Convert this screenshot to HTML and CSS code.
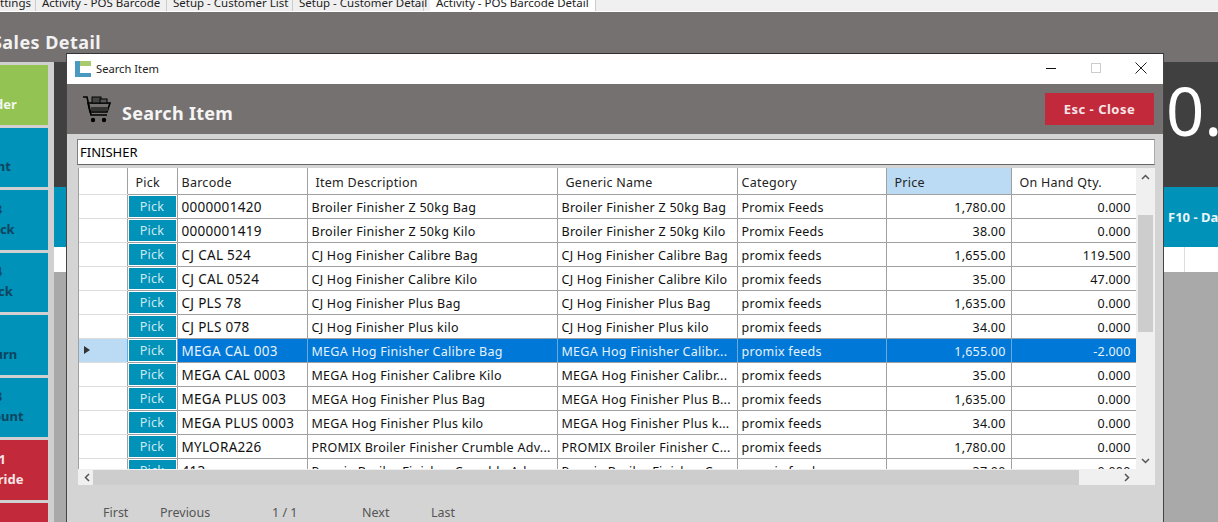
FILE: index.html
```html
<!DOCTYPE html>
<html lang="en">

<head>
    <meta charset="UTF-8">
    <title>Search Item</title>
    <link rel="stylesheet" href="styles.css">
</head>

<body>
    <div class="tabs">
        <div class="tab tab-first">Settings</div>
        <div class="tab tab-barcode">Activity - POS Barcode</div>
        <div class="tab tab-list">Setup - Customer List</div>
        <div class="tab tab-detail">Setup - Customer Detail</div>
        <div class="tab tab-active">Activity - POS Barcode Detail</div>
    </div>

    <div class="page-head">Sales Detail</div>

    <div class="main">
        <div class="sidebar">
            <div class="side-btn green"><div class="wide">Order</div></div>
            <div class="side-btn blue"><div>Print</div></div>
            <div class="side-btn blue"><div class="two">F3<br>Check</div></div>
            <div class="side-btn blue"><div class="two">F4<br>Stock</div></div>
            <div class="side-btn blue"><div>Return</div></div>
            <div class="side-btn blue"><div class="two">F8<br>Discount</div></div>
            <div class="side-btn red"><div class="two">F11<br>Override</div></div>
            <div class="side-btn red"></div>
        </div>
        <div class="content">
            <div class="total">0.</div>
            <div class="actions">F10 - Day End</div>
            <div class="white-row"><div class="white-cell"></div></div>
        </div>
    </div>

    <div class="modal">
        <div class="titlebar">
            <svg class="logo" width="16" height="16" viewBox="0 0 16 16">
                <rect width="5" height="16" fill="#4a9ac0" />
                <rect x="5" width="11" height="5" fill="#a9cb6e" />
                <rect x="5" y="12" width="11" height="4" fill="#4a9ac0" />
            </svg>
            <span class="title-text">Search Item</span>
            <div class="win-controls">
                <svg width="12" height="12" viewBox="0 0 12 12"><path d="M1 6.500h10" stroke="#111" stroke-width="1" /></svg>
                <svg width="12" height="12" viewBox="0 0 12 12"><rect x="1.500" y="1.500" width="9" height="9" fill="none" stroke="#ccc" /></svg>
                <svg width="12" height="12" viewBox="0 0 12 12"><path d="M.5.5l11 11M11.500.5l-11 11" stroke="#222" stroke-width="1" /></svg>
            </div>
        </div>

        <div class="modal-head">
            <svg class="cart" width="30" height="30" viewBox="0 0 30 30">
                <path d="M1 3h4l4 18h16" fill="none" stroke="#000" stroke-width="1.600" />
                <path d="M6 9h22l-3 9H8z" fill="none" stroke="#000" stroke-width="1.600" />
                <rect x="10" y="3" width="9" height="6" fill="#444" stroke="#000" />
                <rect x="18" y="5" width="7" height="4" fill="#555" stroke="#000" />
                <path d="M9 13h17v4H9z" fill="#333" />
                <circle cx="11" cy="26" r="2.200" />
                <circle cx="22" cy="26" r="2.200" />
            </svg>
            <span class="modal-title">Search Item</span>
            <div class="close-btn">Esc - Close</div>
        </div>

        <div class="modal-body">
            <div class="search-box">FINISHER</div>

            <div class="grid-wrap">
                <div class="grid-clip">
                    <table class="grid">
                        <colgroup>
                            <col class="c-head"><col class="c-pick"><col class="c-code"><col class="c-item">
                            <col class="c-gen"><col class="c-cat"><col class="c-num"><col class="c-num">
                        </colgroup>
                        <tr>
                            <th class="row-head"></th>
                            <th>Pick</th>
                            <th class="code-head">Barcode</th>
                            <th>Item Description</th>
                            <th>Generic Name</th>
                            <th class="cat-head">Category</th>
                            <th class="sorted">Price</th>
                            <th>On Hand Qty.</th>
                        </tr>
                        <tr>
                            <td class="row-head"></td><td class="pick"><span>Pick</span></td><td class="code">0000001420</td>
                            <td>Broiler Finisher Z 50kg Bag</td><td>Broiler Finisher Z 50kg Bag</td><td>Promix Feeds</td>
                            <td class="num">1,780.00</td><td class="num">0.000</td>
                        </tr>
                        <tr>
                            <td class="row-head"></td><td class="pick"><span>Pick</span></td><td class="code">0000001419</td>
                            <td>Broiler Finisher Z 50kg Kilo</td><td>Broiler Finisher Z 50kg Kilo</td><td>Promix Feeds</td>
                            <td class="num">38.00</td><td class="num">0.000</td>
                        </tr>
                        <tr>
                            <td class="row-head"></td><td class="pick"><span>Pick</span></td><td class="code">CJ CAL 524</td>
                            <td>CJ Hog Finisher Calibre Bag</td><td>CJ Hog Finisher Calibre Bag</td><td>promix feeds</td>
                            <td class="num">1,655.00</td><td class="num">119.500</td>
                        </tr>
                        <tr>
                            <td class="row-head"></td><td class="pick"><span>Pick</span></td><td class="code">CJ CAL 0524</td>
                            <td>CJ Hog Finisher Calibre Kilo</td><td>CJ Hog Finisher Calibre Kilo</td><td>promix feeds</td>
                            <td class="num">35.00</td><td class="num">47.000</td>
                        </tr>
                        <tr>
                            <td class="row-head"></td><td class="pick"><span>Pick</span></td><td class="code">CJ PLS 78</td>
                            <td>CJ Hog Finisher Plus Bag</td><td>CJ Hog Finisher Plus Bag</td><td>promix feeds</td>
                            <td class="num">1,635.00</td><td class="num">0.000</td>
                        </tr>
                        <tr>
                            <td class="row-head"></td><td class="pick"><span>Pick</span></td><td class="code">CJ PLS 078</td>
                            <td>CJ Hog Finisher Plus kilo</td><td>CJ Hog Finisher Plus kilo</td><td>promix feeds</td>
                            <td class="num">34.00</td><td class="num">0.000</td>
                        </tr>
                        <tr class="selected">
                            <td class="row-head"><i class="row-arrow"></i></td><td class="pick"><span>Pick</span></td><td class="code">MEGA CAL 003</td>
                            <td>MEGA Hog Finisher Calibre Bag</td><td>MEGA Hog Finisher Calibr...</td><td>promix feeds</td>
                            <td class="num">1,655.00</td><td class="num">-2.000</td>
                        </tr>
                        <tr>
                            <td class="row-head"></td><td class="pick"><span>Pick</span></td><td class="code">MEGA CAL 0003</td>
                            <td>MEGA Hog Finisher Calibre Kilo</td><td>MEGA Hog Finisher Calibr...</td><td>promix feeds</td>
                            <td class="num">35.00</td><td class="num">0.000</td>
                        </tr>
                        <tr>
                            <td class="row-head"></td><td class="pick"><span>Pick</span></td><td class="code">MEGA PLUS 003</td>
                            <td>MEGA Hog Finisher Plus Bag</td><td>MEGA Hog Finisher Plus B...</td><td>promix feeds</td>
                            <td class="num">1,635.00</td><td class="num">0.000</td>
                        </tr>
                        <tr>
                            <td class="row-head"></td><td class="pick"><span>Pick</span></td><td class="code">MEGA PLUS 0003</td>
                            <td>MEGA Hog Finisher Plus kilo</td><td>MEGA Hog Finisher Plus k...</td><td>promix feeds</td>
                            <td class="num">34.00</td><td class="num">0.000</td>
                        </tr>
                        <tr>
                            <td class="row-head"></td><td class="pick"><span>Pick</span></td><td class="code">MYLORA226</td>
                            <td>PROMIX Broiler Finisher Crumble Adv...</td><td>PROMIX Broiler Finisher C...</td><td>promix feeds</td>
                            <td class="num">1,780.00</td><td class="num">0.000</td>
                        </tr>
                        <tr>
                            <td class="row-head"></td><td class="pick"><span>Pick</span></td><td class="code">413</td>
                            <td>Premix Broiler Finisher Crumble Adv...</td><td>Premix Broiler Finisher C...</td><td>promix feeds</td>
                            <td class="num">37.00</td><td class="num">0.000</td>
                        </tr>
                    </table>
                </div>
                <div class="vscroll">
                    <svg width="9" height="6" viewBox="0 0 9 6"><path d="M1 5l3.500-3.500L8 5" fill="none" stroke="#555" stroke-width="1.500" /></svg>
                    <div class="vthumb"></div>
                    <svg class="to-end" width="9" height="6" viewBox="0 0 9 6"><path d="M1 1l3.500 3.500L8 1" fill="none" stroke="#555" stroke-width="1.500" /></svg>
                </div>
                <div class="hscroll">
                    <svg width="6" height="9" viewBox="0 0 6 9"><path d="M5 1L1.500 4.500 5 8" fill="none" stroke="#555" stroke-width="1.500" /></svg>
                    <div class="hthumb"></div>
                    <svg width="6" height="9" viewBox="0 0 6 9"><path d="M1 1l3.500 3.500L1 8" fill="none" stroke="#555" stroke-width="1.500" /></svg>
                </div>
            </div>

            <div class="pager">
                <span class="pg-first">First</span>
                <span class="pg-prev">Previous</span>
                <span class="pg-count">1 / 1</span>
                <span class="pg-next">Next</span>
                <span>Last</span>
            </div>
        </div>
    </div>
</body>

</html>
```

FILE: styles.css
```css
* {
    box-sizing: border-box;
}

html,
body {
    height: 100%;
}

body {
    margin: 0;
    overflow: hidden;
    background-color: #a9a9a9;
    color: #000;
    font-family: "Noto Sans", "Open Sans", sans-serif;
    font-size: 13px;
    display: flex;
    flex-direction: column;
    position: relative;
}

.tabs {
    height: 12px;
    display: flex;
    flex: none;
    overflow: hidden;
    background-color: #f0f0f0;
    border-bottom: 1px solid #fff;
    font-size: 11.500px;
    line-height: 11px;
    color: #222;
}

.tab {
    border-right: 1px solid #ccc;
    padding-left: 6px;
    white-space: nowrap;
    margin-top: -6px;
    padding-top: 3px;
}

.tab-first {
    width: 36px;
    direction: rtl;
    padding-right: 4px;
    padding-left: 0;
}

.tab-barcode { width: 131px; }
.tab-list { width: 126px; }
.tab-detail { width: 131px; }

.tab-active {
    width: 166px;
    background-color: #fff;
    margin-left: 6px;
}

.page-head {
    height: 50px;
    flex: none;
    background-color: #767171;
    color: #f2f2f2;
    font-size: 18px;
    font-weight: 700;
    letter-spacing: 0.45px;
    line-height: 60px;
    text-indent: -8px;
}

.main {
    flex: 1;
    display: flex;
    min-height: 0;
}

.sidebar {
    width: 54px;
    flex: none;
    background-color: #d0d0d0;
    padding-top: 3px;
    display: flex;
    flex-direction: column;
    gap: 3px;
    overflow: hidden;
}

.side-btn {
    width: 48px;
    height: 59.500px;
    flex: none;
    overflow: hidden;
    display: flex;
    align-items: center;
    font-size: 13px;
    font-weight: 700;
    line-height: 20px;
}

.side-btn div {
    width: 100px;
    flex: none;
    margin-left: -55px;
    margin-top: 18px;
    text-align: center;
}

.side-btn .two {
    margin-top: -2px;
}

.side-btn .wide {
    margin-left: -52px;
}

.green { background-color: #92c353; color: #f4f8ee; }
.blue { background-color: #0092b8; color: #0e4560; }
.red { background-color: #c22a3c; color: #f6e6e8; }

.content {
    flex: 1;
}

.total {
    height: 125px;
    background-color: #404040;
    color: #fff;
    font-size: 67px;
    line-height: 96px;
    padding-left: 1112px;
    overflow: hidden;
    white-space: nowrap;
}

.actions {
    height: 60px;
    background-color: #0092b8;
    color: #eaf6fa;
    font-weight: 700;
    line-height: 60px;
    padding-left: 1114px;
    white-space: nowrap;
    overflow: hidden;
}

.white-row {
    height: 25px;
    background-color: #fff;
}

.white-cell {
    width: 1131px;
    height: 25px;
    border-right: 1px solid #ddd;
}

/* modal sits over the page behind it */
.modal {
    position: absolute;
    left: 66px;
    top: 53px;
    width: 1098px;
    height: 480px;
    border: 1px solid #444;
    border-top-color: #333;
    background-color: #d4d4d4;
    display: flex;
    flex-direction: column;
}

.titlebar {
    height: 30px;
    flex: none;
    background-color: #fff;
    display: flex;
    align-items: center;
    padding-left: 8px;
}

.logo {
    margin-right: 5px;
}

.title-text {
    font-size: 11.200px;
    color: #222;
    margin-top: -2px;
}

.win-controls {
    margin-left: auto;
    width: 118px;
    padding-right: 16px;
    display: flex;
    justify-content: space-between;
    margin-top: -2px;
}

.modal-head {
    height: 50px;
    flex: none;
    background-color: #767171;
    display: flex;
    align-items: center;
    padding-left: 15px;
    padding-right: 9px;
}

.cart {
    margin-right: 10px;
}

.modal-title {
    color: #f5f5f5;
    font-size: 18px;
    font-weight: 700;
    letter-spacing: 0.3px;
    padding-top: 8px;
}

.close-btn {
    margin-left: auto;
    width: 109px;
    height: 32px;
    background-color: #c22a3c;
    color: #f6e6e8;
    font-weight: 700;
    letter-spacing: 0.5px;
    text-align: center;
    line-height: 33px;
}

.modal-body {
    flex: 1;
    padding: 5px 8px 0 10px;
    min-height: 0;
}

.search-box {
    height: 26px;
    background-color: #fff;
    border: 1px solid #808080;
    border-right-color: #aaa;
    border-bottom-color: #666;
    line-height: 24px;
    padding-left: 2px;
    font-size: 13px;
}

.grid-wrap {
    margin-top: 3px;
    margin-left: 1px;
    display: grid;
    grid-template-columns: 1058px 18px;
    grid-template-rows: 301px 16px;
    background-color: #f0f0f0;
}

.grid-clip {
    overflow: hidden;
    background-color: #fff;
    border-left: 1px solid #a0a0a0;
}

.grid {
    table-layout: fixed;
    width: 1057px;
    border-collapse: collapse;
}

.c-head { width: 48px; }
.c-pick { width: 50px; }
.c-code { width: 130px; }
.c-item { width: 250px; }
.c-gen { width: 180px; }
.c-cat { width: 149px; }
.c-num { width: 125px; }

.grid th,
.grid td {
    height: 24px;
    padding: 2px 4px 0;
    border-right: 1px solid #a0a0a0;
    border-bottom: 1px solid #a0a0a0;
    font-weight: 400;
    text-align: left;
    white-space: nowrap;
    overflow: hidden;
    color: #111;
    font-size: 12.500px;
    letter-spacing: 0.27px;
}

.grid th {
    height: 26px;
    padding-top: 4px;
    padding-left: 8px;
    color: #222;
}

.grid th.code-head,
.grid th.cat-head {
    padding-left: 4px;
}

.grid th.sorted {
    background-color: #bbdaf3;
}

.grid td.code {
    font-size: 13.500px;
    letter-spacing: 0.3px;
}

.grid .row-head {
    border-bottom-color: #ddd;
    background-color: #fff;
    padding: 0 0 0 5px;
}

.grid td.num {
    text-align: right;
    padding-right: 5px;
    letter-spacing: 0.2px;
}

.grid td.pick {
    padding: 1px;
}

.pick span {
    display: block;
    height: 21px;
    line-height: 22px;
    background-color: #0092b8;
    color: #cfeaf2;
    text-align: center;
}

.selected td {
    background-color: #0078d7;
    color: #e6f3fc;
    border-right-color: #6aa9dc;
}

.grid .selected .row-head {
    background-color: #bbdaf3;
}

.grid .selected .pick {
    background-color: #fff;
}

.row-arrow {
    display: block;
    width: 0;
    height: 0;
    border-left: 6px solid #333;
    border-top: 4px solid transparent;
    border-bottom: 4px solid transparent;
}

.vscroll {
    display: flex;
    flex-direction: column;
    align-items: center;
    padding-top: 6px;
    padding-bottom: 5px;
    height: 301px;
}

.vthumb {
    width: 15px;
    height: 117px;
    margin-top: 35px;
    background-color: #cdcdcd;
}

.to-end {
    margin-top: auto;
}

.hscroll {
    grid-column: 1 / 3;
    display: flex;
    align-items: center;
    padding: 0 24px 0 6px;
}

.hthumb {
    width: 986px;
    height: 15px;
    margin-left: 3px;
    margin-right: auto;
    background-color: #cdcdcd;
}

.pager {
    display: flex;
    margin-top: 19px;
    padding-left: 26px;
    color: #555;
    font-size: 12.500px;
}

.pager span {
    flex: none;
}

.pg-first { width: 57px; }
.pg-prev { width: 112px; }
.pg-count { width: 90px; }
.pg-next { width: 69px; }
```
